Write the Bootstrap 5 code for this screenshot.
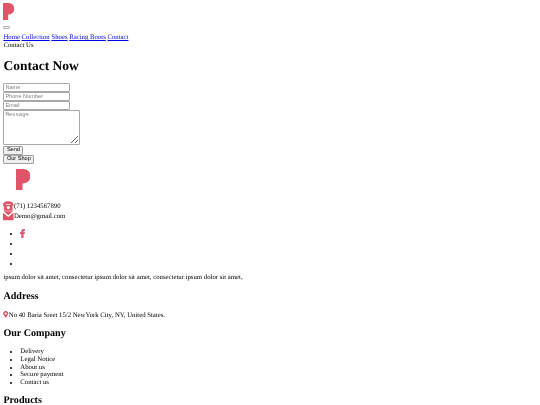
<!DOCTYPE html>
<html lang="en">
<head>
    <meta charset="UTF-8">
    <meta name="viewport" content="width=device-width, initial-scale=1.0">
    <title>Contact Now</title>
    <link rel="stylesheet" href="https://cdn.jsdelivr.net/npm/bootstrap@5.3.0/dist/css/bootstrap.min.css">
    <style>
        html, body { overflow: hidden; }
        body { margin: 3.4px; font: 6.75px/7.77px "Liberation Serif", serif; color: #000; background: #fff; text-rendering: geometricPrecision; filter: blur(.4px); }
        a { color: #0000ee; text-decoration: underline; }
        h1, h2 { font-family: "Liberation Serif", serif; font-weight: 700; line-height: normal; }
        h1 { font-size: 13.5px; margin: 8.4px 0 8.5px; }
        h2 { font-size: 10.1px; margin: 8.9px 0; }
        .company-head { margin: 8.4px 0 9px; }
        .products-head { margin-top: 7.9px; }
        p { margin: 6.75px 0; }
        ul { margin: 6.75px 0; padding-left: 16.9px; }
        .logo-top { display: block; width: 11px; height: 17px; }
        .menu-btn { display: block; width: 6.5px; height: 3px; margin: 6px 0 4.8px; padding: 0; background: #efefef; border: 1px solid #b5b5b5; border-radius: 1px; }
        .field { display: block; width: 67px; height: 9px; padding: 0 1px; font: 5.6px "Liberation Sans", sans-serif; border: 1px solid #a8a8a8; border-radius: 1px; outline: 0; }
        .field::placeholder { color: #808080; opacity: 1; }
        .field-msg { width: 77px; height: 35px; font-family: "Liberation Mono", monospace; }
        .plain-btn { display: block; height: 9px; padding: 0 2.5px; font: 5.6px/1 "Liberation Sans", sans-serif; color: #000; background: #efefef; border: 1px solid #a0a0a0; border-radius: 1px; }
        .send-btn { margin-top: 1px; }
        .logo-wrap { padding: 5.3px 0 10.8px 13px; }
        .logo-foot { display: block; width: 14px; height: 21px; }
        .ico { width: 10.5px; height: 10px; flex: none; }
        .social { height: 38.5px; margin: 8.5px 0 0; }
        .social li { height: 10.3px; }
        .pin { width: 5.4px; height: 7px; vertical-align: -1px; }
    </style>
</head>
<body>
    <svg class="logo-top" viewBox="0 0 11 17"><path fill="#e05468" d="M0 0h6a5 5.500 0 0 1 0 11.500H5.200V17H0Z"/></svg>
    <button class="menu-btn" type="button"></button>
    <div>
        <a href="#">Home</a> <a href="#">Collection</a> <a href="#">Shoes</a> <a href="#">Racing Boots</a> <a href="#">Contact</a>
    </div>
    <div>Contact Us</div>

    <h1>Contact Now</h1>

    <form>
        <input class="field" type="text" placeholder="Name">
        <input class="field" type="text" placeholder="Phone Number">
        <input class="field" type="text" placeholder="Email">
        <textarea class="field field-msg" placeholder="Message"></textarea>
        <button class="plain-btn send-btn" type="button">Send</button>
        <button class="plain-btn" type="button">Our Shop</button>
    </form>

    <div class="logo-wrap">
        <svg class="logo-foot" viewBox="0 0 14 21"><path fill="#e05468" d="M0 0h7.500a7 7.200 0 0 1 0 14.400H6.500V21H0Z"/></svg>
    </div>

    <div class="d-flex align-items-end">
        <svg class="ico" viewBox="0 0 11 10"><path fill="#e05468" d="M0 4Q0 0 5.500 0T11 4V5H8V3H3V5H0ZM3.200 3.800H7.800L10 5.500V10H1V5.500Z"/><circle cx="5.500" cy="6.600" r="1.700" fill="#fff"/></svg>
        <span>(71) 1234567890</span>
    </div>
    <div class="d-flex align-items-end">
        <svg class="ico" viewBox="0 0 11 10"><path fill="#e05468" d="M.5 0H10.500L5.500 4.200ZM0 1.500 5.500 6 11 1.500V9.500H0Z"/></svg>
        <span>Demo@gmail.com</span>
    </div>

    <ul class="social">
        <li><svg width="5" height="9" viewBox="0 0 5 9"><path fill="#e05468" d="M1.300 9V5H0V3.300H1.300V2Q1.300 0 3.500 0H5V1.700H4.200Q3.500 1.700 3.500 2.300V3.300H5L4.700 5H3.500V9Z"/></svg></li>
        <li></li>
        <li></li>
        <li></li>
    </ul>

    <p>ipsum dolor sit amet, consectetur ipsum dolor sit amet, consectetur ipsum dolor sit amet,</p>

    <h2>Address</h2>
    <p><svg class="pin" viewBox="0 0 5 7"><path fill="#e05468" fill-rule="evenodd" d="M2.500 7 .5 4A2.500 2.500 0 1 1 4.500 4ZM2.500 1.400a1.100 1.100 0 1 0 .01 0Z"/></svg>No 40 Baria Sreet 15/2 NewYork City, NY, United States.</p>

    <h2 class="company-head">Our Company</h2>
    <ul>
        <li>Delivery</li>
        <li>Legal Notice</li>
        <li>About us</li>
        <li>Secure payment</li>
        <li>Contact us</li>
    </ul>

    <h2 class="products-head">Products</h2>

    <script src="https://cdn.jsdelivr.net/npm/bootstrap@5.3.0/dist/js/bootstrap.bundle.min.js"></script>
</body>
</html>
